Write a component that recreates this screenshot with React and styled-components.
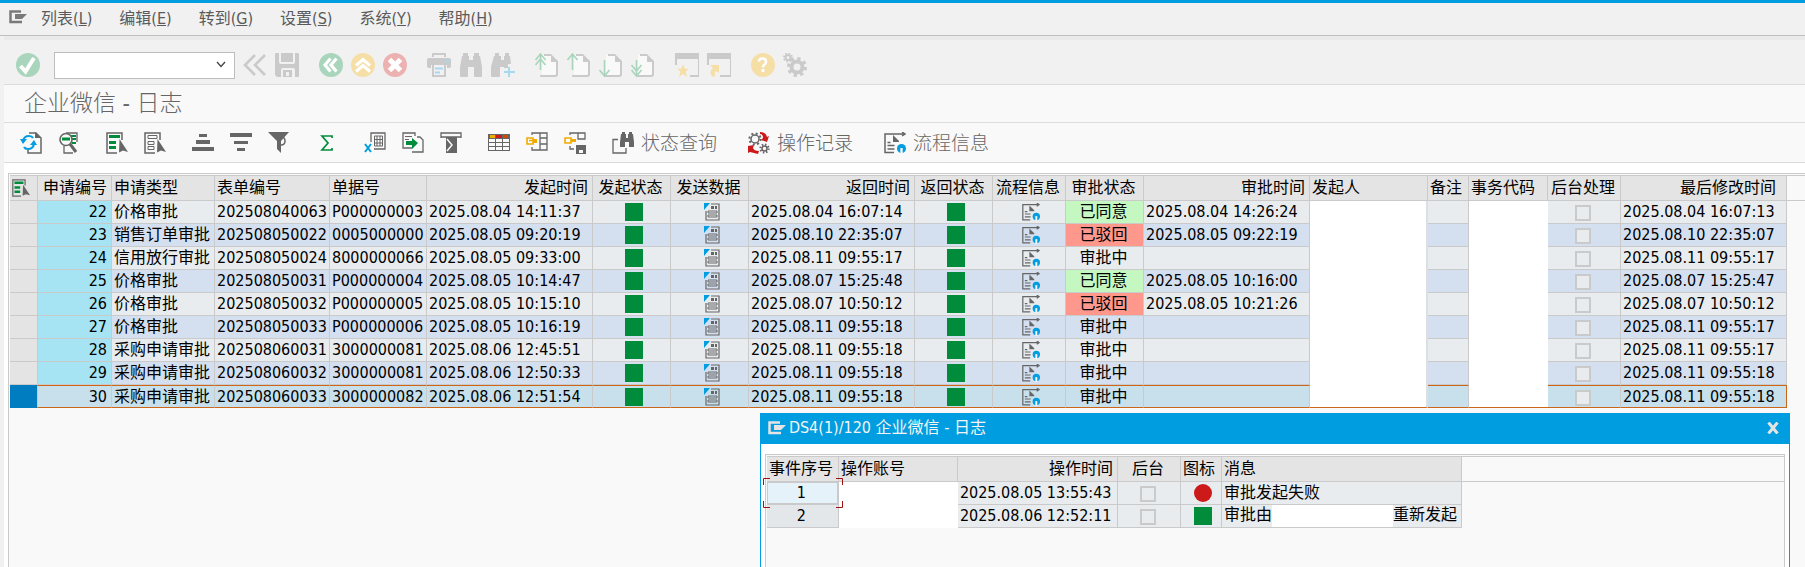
import React from "react";
import styled, { createGlobalStyle, css } from "styled-components";

const sans = '"DejaVu Sans Condensed", "Noto Sans CJK SC", sans-serif';
const line = "#cacaca";
const G = "#666666";
const GREEN = "#008c3a";
const BLUE = "#009de0";
const DIS = "#cacaca";
const RED = "#cc1919";

const Global = createGlobalStyle`
  * { box-sizing: border-box; }
  body { margin: 0; background: #fff; font-family: ${sans}; font-size: 16px; color: #000; overflow: hidden; }
  button { font: inherit; color: inherit; background: none; border: 0; padding: 0; }
`;

const Screen = styled.div`
  position: relative;
  display: flex;
  flex-direction: column;
  min-height: 100vh;
  border-top: 3px solid ${BLUE};
  background: #f1f1f1;
`;
const MenuBar = styled.nav`
  display: flex;
  align-items: center;
  gap: 27px;
  height: 33px;
  padding: 0 9px;
  border-bottom: 1px solid #bfbfbf;
  color: #5a5a5a;
  svg { margin-right: -13px; margin-bottom: 4px; }
`;
const MenuItem = styled.button`
  line-height: 24px;
  white-space: nowrap;
`;
const CommandBar = styled.div`
  display: flex;
  align-items: center;
  gap: 20px;
  height: 49px;
  margin-left: 4px;
  padding: 6px 12px 0;
  border-top: 4px solid #eaeaea;
  border-bottom: 1px solid #dcdcdc;
`;
const Group = styled.div`
  display: flex;
  align-items: center;
  gap: 8px;
`;
const IconButton = styled.button`
  display: flex;
  svg { display: block; }
`;
const Combo = styled.div`
  display: flex;
  align-items: center;
  width: 181px;
  height: 27px;
  margin: 0 -12px 0 -6px;
  padding-right: 7px;
  border: 1px solid #bdbdbd;
  background: #fff;
`;
const ComboInput = styled.input`
  flex: 1;
  min-width: 0;
  border: 0;
  outline: 0;
  background: transparent;
  font: inherit;
`;
const Title = styled.h1`
  height: 38px;
  margin: 0 0 0 4px;
  padding-left: 20px;
  border-bottom: 1px solid #dcdcdc;
  background: #f9f9f9;
  font-size: 23px;
  font-weight: 300;
  line-height: 36px;
  color: ${G};
`;
const AppBar = styled.div`
  display: flex;
  align-items: center;
  gap: 26px;
  height: 40px;
  margin-left: 4px;
  padding-left: 16px;
  border-bottom: 1px solid #dcdcdc;
  background: #f9f9f9;
`;
const AppGroup = styled(Group)`
  gap: 16px;
`;
const LabelButton = styled.button`
  display: flex;
  align-items: center;
  gap: 7px;
  margin-right: 5px;
  font-size: 19px;
  font-weight: 300;
  line-height: 24px;
  color: ${G};
  white-space: nowrap;
`;
const Body = styled.main`
  flex: 1;
  display: flex;
  margin-left: 4px;
  padding: 10px 0 0 4px;
  background: #fff;
`;
const Grid = styled.div`
  flex: 1;
  min-width: 0;
  padding: 1px 0 0 1px;
  border: 1px solid ${line};
  border-width: 1px 0 0 1px;
  background: #f9f9f9;
`;
const Table = styled.table`
  width: 100%;
  table-layout: fixed;
  border-collapse: separate;
  border-spacing: 0;
  border-top: 1px solid ${line};
`;
const Col = styled.col`
  width: ${(p) => (p.$w ? `${p.$w}px` : "auto")};
`;
const Th = styled.th`
  height: 25px;
  padding: 0 ${(p) => p.$end || 4}px 0 2px;
  border-right: 1px solid ${line};
  border-bottom: 1px solid ${line};
  background: #e4e4e4;
  font-weight: 400;
  line-height: 20px;
  text-align: ${(p) => p.$align || "left"};
  white-space: nowrap;
`;
const HeadFill = styled.td`
  border-bottom: 1px solid ${line};
`;
const tones = {
  ok: "#c4f8c0",
  bad: "#ff988c",
  key: "#a6e4f4",
  side: "#e4e4e4",
};
const Td = styled.td`
  height: 23px;
  padding: 0 4px 0 2px;
  border-right: 1px solid ${line};
  border-bottom: 1px solid ${line};
  background: ${(p) => tones[p.$tone] || "inherit"};
  line-height: 20px;
  text-align: ${(p) => p.$align || "left"};
  white-space: nowrap;
`;
const IconTd = styled(Td)`
  padding: 0 0 0 4px;
  svg { display: block; margin: 0 auto; }
`;
const Masked = styled.td`
  height: 23px;
  padding: 0;
  border-right: ${(p) => p.$edge || 0}px solid #dcdfe4;
  background: #fff;
`;
const Row = styled.tr`
  background: ${(p) => (p.$odd ? "#d4dff0" : "#e8ecef")};
  ${(p) =>
    p.$selected &&
    css`
      background: #c8e0ec;
      & > ${Td} {
        border-top: 1px solid #cc6619;
        border-bottom-color: #cc6619;
      }
      & > ${Td}:not(:first-child) {
        background: inherit;
      }
      & > ${Td}:last-child {
        border-right-color: #cc6619;
      }
      & > ${Masked} {
        border-bottom: 1px solid #cc6619;
      }
      & > ${Td}:first-child {
        border-color: #007cc0;
        border-right-color: ${line};
        background: #007cc0;
      }
    `}
`;
const Check = styled.input`
  appearance: none;
  display: block;
  width: 16px;
  height: 16px;
  margin: 2px auto 0;
  border: 2px solid ${line};
  background: #e8ecef;
`;

const Dialog = styled.section`
  position: absolute;
  top: 410px;
  right: 15px;
  bottom: 0;
  left: 42.1%;
  display: flex;
  flex-direction: column;
  border: 1px solid ${BLUE};
  border-width: 0 1px;
  background: #fff;
`;
const DialogTitle = styled.header`
  display: flex;
  align-items: center;
  gap: 3px;
  height: 31px;
  padding: 0 10px 2px 7px;
  background: ${BLUE};
  color: #f4f4f4;
  line-height: 24px;
`;
const DialogHeading = styled.h2`
  flex: 1;
  margin: 0;
  font-size: 16px;
  font-weight: 400;
`;
const DialogGrid = styled(Grid)`
  margin: 10px 4px 0;
  border-width: 1px 1px 0 1px;
`;
const FocusTd = styled(Td)`
  background: ${(p) => (p.$focus ? "#e5f2f9" : "#e4e7ea")};
  ${(p) =>
    p.$focus &&
    css`
      position: relative;
      box-shadow: inset 0 0 0 1px ${line};
      svg { position: absolute; top: -4px; left: -4px; z-index: 1; }
    `}
`;
const Message = styled.div`
  display: flex;
  align-items: stretch;
  height: 22px;
  line-height: 20px;
`;
const Blank = styled.span`
  flex: 0 0 121px;
  background: #fff;
`;

const Svg = ({ s = 24, w = s, h = s, box = `0 0 ${w} ${h}`, children }) => (
  <svg width={w} height={h} viewBox={box} fill="none" aria-hidden="true">
    {children}
  </svg>
);

const SystemMenuIcon = ({ c = "#7a7a7a" }) => (
  <Svg w={18} h={14}>
    <path d="M12 1.500H1.500v10.500H13" stroke={c} strokeWidth="2.500" />
    <path d="M6 4h12l-5 5H6z" fill={c} />
  </Svg>
);

const Disc = ({ c, children }) => (
  <Svg>
    <circle cx="12" cy="12" r="12" fill={c} />
    {children}
  </Svg>
);
const Page = () => (
  <>
    <path d="M7 1.500h10l5 5v16H7z" fill="#f9f9f9" />
    <path d="M9 1h7l7 7v13q0 3-3 3H6q-1 0-1-2h15q1 0 1-1V9h-5V3H9z" fill={DIS} />
  </>
);

const command = {
  enter: (
    <Disc c="#a8d5bb">
      <path d="M4.500 13l5 5.500L18 5" stroke="#fff" strokeWidth="4" />
    </Disc>
  ),
  collapse: (
    <Svg>
      <path d="M12 2L2 12l10 10M22 2L12 12l10 10" stroke={DIS} strokeWidth="2.600" />
    </Svg>
  ),
  save: (
    <Svg>
      <path d="M0 1q0-1 1-1h3v9q0 2 2 2h12q2 0 2-2V0h3q1 0 1 1v23h-4v-7q0-2-2-2H8q-2 0-2 2v7H2l-2-2z" fill={DIS} />
      <path d="M6 0h12v9H6zM8 17h9v7H8z" fill={DIS} />
      <path d="M11 19h3v4h-3z" fill="#f1f1f1" />
    </Svg>
  ),
  back: (
    <Disc c="#a8d5bb">
      <path d="M11.500 5.500L6 12l5.500 6.500M17.500 5.500L12 12l5.500 6.500" stroke="#fff" strokeWidth="3.200" />
    </Disc>
  ),
  exit: (
    <Disc c="#f5dfa6">
      <path d="M5 12.500L12 6.500l7 6M5 18.500l7-6 7 6" stroke="#fff" strokeWidth="3.200" />
    </Disc>
  ),
  cancel: (
    <Disc c="#ecb1b1">
      <path d="M6.500 6.500l11 11M17.500 6.500l-11 11" stroke="#fff" strokeWidth="5" />
    </Disc>
  ),
  print: (
    <Svg>
      <path d="M5 4V1q0-1 1-1h12q1 0 1 1v3h-2V2H7v2zM2 5h20q2 0 2 2v6q0 2-2 2h-2v-3H4v3H2q-2 0-2-2V7q0-2 2-2z" fill={DIS} />
      <path d="M6 12v11h12V12" stroke={DIS} strokeWidth="2" />
      <path d="M8 15.500h8M8 19.500h5M18 8h4" stroke="#a6d8f0" strokeWidth="2" />
    </Svg>
  ),
  find: (
    <Svg>
      <path
        d="M4 0h5v3h1v4h4V3h1V0h5v3h1l2 11v9q0 1-1 1h-6q-1 0-1-1v-9h-6v9q0 1-1 1H2q-1 0-1-1v-9L3 3h1z"
        fill={DIS}
      />
    </Svg>
  ),
  findNext: (
    <Svg>
      <path d="M4 0h4v3h2v4h3V3h1V0h4v3h1l1 8h-3v4h-4v-1H9v9q0 1-1 1H1q-1 0-1-1v-9L3 3h1z" fill={DIS} />
      <path d="M18 14v10M13 19h11" stroke="#a6d8f0" strokeWidth="2" />
    </Svg>
  ),
  first: (
    <Svg>
      <Page />
      <path d="M5.500 2v15M0.500 7l5-6 5 6M0.500 12l5-6 5 6" stroke="#a8d5bb" strokeWidth="1.600" />
    </Svg>
  ),
  prev: (
    <Svg>
      <Page />
      <path d="M5.500 1v16M0.500 7l5-6 5 6" stroke="#a8d5bb" strokeWidth="1.600" />
    </Svg>
  ),
  next: (
    <Svg>
      <Page />
      <path d="M5.500 7v16M0.500 17l5 6 5-6" stroke="#a8d5bb" strokeWidth="1.600" />
    </Svg>
  ),
  last: (
    <Svg>
      <Page />
      <path d="M5.500 7v16M0.500 12l5 6 5-6M0.500 17l5 6 5-6" stroke="#a8d5bb" strokeWidth="1.600" />
    </Svg>
  ),
  session: (
    <Svg>
      <path d="M0 0h25v24H15v-2h8V6H2v6H0z" fill={DIS} />
      <path d="M8 11l1.800 4.800H14l-3.400 3L12 24l-4-3-4 3 1.400-5.200L2 15.800h4.200z" fill="#f5dfa6" />
    </Svg>
  ),
  shortcut: (
    <Svg>
      <path d="M0 0h25v24H13v-2h10V6H2v6H0z" fill={DIS} />
      <path d="M3 12h9v8l-3-2q-2 1-1 6-6-1-4-7l2-2z" fill="#f5dfa6" />
    </Svg>
  ),
  help: (
    <Disc c="#f5dfa6">
      <path d="M8 8.500Q8 5.500 11.500 5.500t3.500 3q0 2-1.500 3-1.500 1-1.500 3" stroke="#fff" strokeWidth="2.600" />
      <path d="M10.500 16h3v3h-3z" fill="#fff" />
    </Disc>
  ),
  customize: (
    <Svg>
      <circle cx="14" cy="14" r="5.500" stroke={DIS} strokeWidth="4" />
      <circle cx="14" cy="14" r="8.500" stroke={DIS} strokeWidth="3" strokeDasharray="3.300 3.380" />
      <circle cx="5" cy="4.500" r="2.500" stroke={DIS} strokeWidth="2" />
      <circle cx="5" cy="4.500" r="4" stroke={DIS} strokeWidth="2" strokeDasharray="1.600 1.540" />
    </Svg>
  ),
};

const Gear = ({ x, y, r }) => (
  <>
    <circle cx={x} cy={y} r={r} stroke={G} strokeWidth="1.500" />
    <circle cx={x} cy={y} r={r + 1.6} stroke={G} strokeWidth="2" strokeDasharray={`${(r + 1.6) * 0.36} ${(r + 1.6) * 0.425}`} />
  </>
);
const SelectAll = ({ s = 22, on = GREEN }) => (
  <Svg s={s} box="0 0 22 22">
    <path d="M16 8V1H1v20h10" stroke={G} strokeWidth="1.500" />
    {on ? (
      <path d="M3 3h11v3H3zM3 9h7v3H3zM3 14h7v3H3z" fill={on} />
    ) : (
      <path d="M4 3.500h9v3H4zM4 9.500h6v3H4zM4 14.500h6v3H4z" stroke={G} />
    )}
    <path d="M13.500 7L22 20l-5-1.500-4 2z" fill={G} />
  </Svg>
);
const FlowIcon = ({ s = 22 }) => (
  <Svg s={s} box="0 0 22 22">
    <path d="M21 2H1v18.500h9M18 0l3 2-3 2" stroke={G} strokeWidth="1.500" />
    <path d="M9 3l6 6v1H9z" fill={G} />
    <path d="M3.500 10.500h3M3.500 13.500h7M3.500 17h7" stroke={G} strokeWidth="1.400" />
    <circle cx="17.500" cy="16.500" r="4.500" fill={BLUE} />
    <path d="M17.500 22v-6" stroke="#f4f6f8" strokeWidth="2.400" />
  </Svg>
);

const tool = {
  refresh: (
    <Svg s={22}>
      <path d="M9 1h7l5 5v15H8v-3" stroke={G} strokeWidth="1.500" />
      <path d="M15 0l6 6h-6z" fill={G} />
      <path d="M3 9q1-5 6-5 3 0 4 2M14 12q-1 5-6 5-3 0-4-2" stroke={BLUE} strokeWidth="2" />
      <path d="M0 7h7l-4 5zM10 13h7l-3-5z" fill={BLUE} />
    </Svg>
  ),
  details: (
    <Svg s={22}>
      <path d="M8 1h11v9M6 14v7h9" stroke={G} strokeWidth="1.300" />
      <path d="M13 3h5v2h-5zM13 6h5v2h-5zM14 10h4v2h-4z" fill={GREEN} />
      <circle cx="8" cy="7.500" r="6" stroke={G} strokeWidth="1.600" fill="#f9f9f9" />
      <path d="M4 5.500h8v3H4z" fill={GREEN} />
      <path d="M12 12l6 8" stroke={G} strokeWidth="3" />
    </Svg>
  ),
  all: <SelectAll />,
  none: <SelectAll on={null} />,
  asc: (
    <Svg s={22}>
      <path d="M7 2h8v3H7zM4 8h14v4H4zM0 15h22v4H0z" fill={G} />
    </Svg>
  ),
  desc: (
    <Svg s={22}>
      <path d="M0 1h22v4H0zM4 9h14v3H4zM7 16h8v3H7z" fill={G} />
    </Svg>
  ),
  filter: (
    <Svg s={22}>
      <path d="M0 0h21l-8 9v12l-4-4V9z" fill={G} />
      <path d="M13 5q4 0 4 4t-4 4" stroke={G} strokeWidth="1.500" />
    </Svg>
  ),
  sum: (
    <Svg s={22}>
      <path d="M16 6V4H6l6 7-6 7h10v-2" stroke={GREEN} strokeWidth="1.700" />
    </Svg>
  ),
  sheet: (
    <Svg s={22}>
      <path d="M7 10V1h14v16H10" stroke={G} strokeWidth="1.300" />
      <path d="M10.500 4h8v10h-8zM10.500 7.500h8M10.500 11h8M13 4v10M16 4v10" stroke={G} />
      <path d="M1 12l6 8M7 12l-6 8" stroke={BLUE} strokeWidth="2" />
    </Svg>
  ),
  exportFile: (
    <Svg s={22}>
      <path d="M13 4V1H1v15h9M15 5h3l3 3v12H10" stroke={G} strokeWidth="1.300" />
      <path d="M3 4.500h7M3 7.500h4" stroke={G} />
      <path d="M4 9h6V6l6 5-6 6v-4H4z" fill={GREEN} />
    </Svg>
  ),
  send: (
    <Svg s={22}>
      <path d="M1 6V1h20v5M1 5h20" stroke={G} strokeWidth="1.300" />
      <path d="M6 5h11v16H6z" fill={G} />
      <path d="M7 7l5 6-5 6" stroke="#f9f9f9" strokeWidth="1.500" />
    </Svg>
  ),
  layout: (
    <Svg s={22}>
      <path d="M0 2h22v17H0z" fill={G} />
      <path d="M2 3h5v3H2z" fill="#f0ab00" />
      <path d="M8 3h6v3H8z" fill={RED} />
      <path d="M15 3h5v3h-5z" fill="#d04a00" />
      <path d="M1 7h6v3H1zM8 7h6v3H8zM15 7h6v3h-6zM1 11h6v3H1zM8 11h6v3H8zM15 11h6v3h-6zM1 15h6v3H1zM8 15h6v3H8zM15 15h6v3h-6z" fill="#f9f9f9" />
    </Svg>
  ),
  pickLayout: (
    <Svg s={22}>
      <path d="M6 3V1h15v17H6v-3M14 1v17M14 6h7M14 12h7" stroke={G} strokeWidth="1.300" />
      <path d="M1 6h6v6H1zM3 8.500h4" stroke="#f0ab00" strokeWidth="1.600" />
      <path d="M7 9h4" stroke="#f0ab00" strokeWidth="4" />
    </Svg>
  ),
  saveLayout: (
    <Svg s={22}>
      <path d="M6 3V1h15v6h-7V1M6 14v3h4" stroke={G} strokeWidth="1.300" />
      <path d="M1 6h6v5H1z" stroke="#f0ab00" strokeWidth="1.600" />
      <path d="M7 8.500h5" stroke="#f0ab00" strokeWidth="3" />
      <path d="M12 13h10v9H12z" fill={G} />
      <path d="M15 18h4v3h-4z" fill="#f9f9f9" />
    </Svg>
  ),
  query: (
    <Svg s={22}>
      <path d="M10 0h3v2h1v4h2V2h1V0h3v2h1l1 8v5h-5v-5h-4v5H8v-5l1-8h1z" fill={G} />
      <path d="M6 7.500H1V21h13v-5" stroke={G} strokeWidth="1.300" />
    </Svg>
  ),
  history: (
    <Svg s={22}>
      <Gear x={7} y={7} r={4} />
      <Gear x={16.500} y={16.500} r={2.500} />
      <path d="M12 0q6 0 7 5l2-1-2 6-6-2 2-2q0-4-3-4zM0 14l6-1-1 3q1 3 6 3l-1 3-8-2-2 1z" fill={RED} />
    </Svg>
  ),
  flow: <FlowIcon />,
};

const DocIcon = () => (
  <Svg s={18}>
    <path d="M1 0h6L1 7z" fill={BLUE} />
    <path d="M8 1h8v16H3V8" stroke={G} strokeWidth="1.200" />
    <path d="M8 3h3v3H8zM12 3h2v3h-2z" fill={G} />
    <path d="M5 8h9v2H5zM5 12h9v2H5z" stroke={G} />
  </Svg>
);
const GreenBox = () => (
  <Svg s={18}>
    <path d="M0 0h18v18H0z" fill={GREEN} />
  </Svg>
);
const RedDot = () => (
  <Svg s={18}>
    <circle cx="9" cy="9" r="9" fill={RED} />
  </Svg>
);

const menus = [
  ["列表", "L"],
  ["编辑", "E"],
  ["转到", "G"],
  ["设置", "S"],
  ["系统", "Y"],
  ["帮助", "H"],
];
const commandGroups = [
  [["collapse", "折叠"], ["save", "保存"]],
  [["back", "返回"], ["exit", "退出"], ["cancel", "取消"]],
  [["print", "打印"], ["find", "查找"], ["findNext", "查找下一个"]],
  [["first", "首页"], ["prev", "上一页"], ["next", "下一页"], ["last", "末页"]],
  [["session", "新建会话"], ["shortcut", "创建快捷方式"]],
  [["help", "帮助"], ["customize", "定制布局"]],
];
const toolGroups = [
  [["refresh", "刷新"], ["details", "明细"]],
  [["all", "全选"], ["none", "取消全选"]],
  [["asc", "升序"], ["desc", "降序"], ["filter", "筛选"]],
  [["sum", "合计"]],
  [["sheet", "电子表格"], ["exportFile", "导出"], ["send", "发送"]],
  [["layout", "更改布局"], ["pickLayout", "选择布局"], ["saveLayout", "保存布局"]],
];
const actions = [
  ["query", "状态查询"],
  ["history", "操作记录"],
  ["flow", "流程信息"],
];

const columns = [
  [74, "申请编号", "right"],
  [103, "申请类型"],
  [115, "表单编号"],
  [97, "单据号"],
  [166, "发起时间", "right"],
  [78, "发起状态", "center"],
  [78, "发送数据", "center"],
  [166, "返回时间", "right"],
  [78, "返回状态", "center"],
  [73, "流程信息", "center"],
  [78, "审批状态", "center"],
  [166, "审批时间", "right"],
  [118, "发起人"],
  [41, "备注"],
  [79, "事务代码"],
  [73, "后台处理", "center"],
  [166, "最后修改时间", "right", 10],
];
const rows = [
  ["22", "价格审批", "202508040063", "P000000003", "2025.08.04 14:11:37", "2025.08.04 16:07:14", "已同意", "2025.08.04 14:26:24", "2025.08.04 16:07:13"],
  ["23", "销售订单审批", "202508050022", "0005000000", "2025.08.05 09:20:19", "2025.08.10 22:35:07", "已驳回", "2025.08.05 09:22:19", "2025.08.10 22:35:07"],
  ["24", "信用放行审批", "202508050024", "8000000066", "2025.08.05 09:33:00", "2025.08.11 09:55:17", "审批中", "", "2025.08.11 09:55:17"],
  ["25", "价格审批", "202508050031", "P000000004", "2025.08.05 10:14:47", "2025.08.07 15:25:48", "已同意", "2025.08.05 10:16:00", "2025.08.07 15:25:47"],
  ["26", "价格审批", "202508050032", "P000000005", "2025.08.05 10:15:10", "2025.08.07 10:50:12", "已驳回", "2025.08.05 10:21:26", "2025.08.07 10:50:12"],
  ["27", "价格审批", "202508050033", "P000000006", "2025.08.05 10:16:19", "2025.08.11 09:55:18", "审批中", "", "2025.08.11 09:55:17"],
  ["28", "采购申请审批", "202508060031", "3000000081", "2025.08.06 12:45:51", "2025.08.11 09:55:18", "审批中", "", "2025.08.11 09:55:17"],
  ["29", "采购申请审批", "202508060032", "3000000081", "2025.08.06 12:50:33", "2025.08.11 09:55:18", "审批中", "", "2025.08.11 09:55:18"],
  ["30", "采购申请审批", "202508060033", "3000000082", "2025.08.06 12:51:54", "2025.08.11 09:55:18", "审批中", "", "2025.08.11 09:55:18"],
];
const statusTone = { 已同意: "ok", 已驳回: "bad" };

const logColumns = [
  [72, "事件序号"],
  [119, "操作账号"],
  [160, "操作时间", "right"],
  [63, "后台", "center"],
  [41, "图标"],
  [240, "消息"],
];

function RequestRow({ r, i }) {
  const [id, type, form, doc, sent, returned, status, approved, changed] = r;
  return (
    <Row $odd={i % 2 === 1} $selected={i === rows.length - 1}>
      <Td $tone="side" />
      <Td $tone="key" $align="right">{id}</Td>
      <Td>{type}</Td>
      <Td>{form}</Td>
      <Td>{doc}</Td>
      <Td>{sent}</Td>
      <IconTd><GreenBox /></IconTd>
      <IconTd><DocIcon /></IconTd>
      <Td>{returned}</Td>
      <IconTd><GreenBox /></IconTd>
      <IconTd><FlowIcon s={18} /></IconTd>
      <Td $tone={statusTone[status]} $align="center">{status}</Td>
      <Td>{approved}</Td>
      <Masked $edge={2} />
      <Td />
      <Masked />
      <Td><Check type="checkbox" disabled aria-label={`后台处理 ${id}`} /></Td>
      <Td>{changed}</Td>
    </Row>
  );
}

function LogDialog() {
  return (
    <Dialog role="dialog" aria-labelledby="log-title">
      <DialogTitle>
        <SystemMenuIcon c="#e4e4e4" />
        <DialogHeading id="log-title">DS4(1)/120 企业微信 - 日志</DialogHeading>
        <IconButton aria-label="关闭">
          <Svg s={12}>
            <path d="M1.500 0.500l9 11M10.500 0.500l-9 11" stroke="#e4e4e4" strokeWidth="3" />
          </Svg>
        </IconButton>
      </DialogTitle>
      <DialogGrid>
        <Table>
          <colgroup>
            {logColumns.map(([w, t]) => <Col key={t} $w={w} />)}
            <Col />
          </colgroup>
          <thead>
            <tr>
              {logColumns.map(([, t, a]) => <Th key={t} $align={a}>{t}</Th>)}
              <HeadFill />
            </tr>
          </thead>
          <tbody>
            <Row>
              <FocusTd $focus $align="center">
                1
                <Svg w={80} h={30}>
                  <path d="M0.500 7V0.500H7M73 0.500h6.500V7M0.500 23v6.500H7M73 29.500h6.500V23" stroke="#a01010" />
                </Svg>
              </FocusTd>
              <Masked />
              <Td>2025.08.05 13:55:43</Td>
              <Td><Check type="checkbox" disabled aria-label="后台 1" /></Td>
              <IconTd><RedDot /></IconTd>
              <Td>审批发起失败</Td>
            </Row>
            <Row>
              <FocusTd $align="center">2</FocusTd>
              <Masked />
              <Td>2025.08.06 12:52:11</Td>
              <Td><Check type="checkbox" disabled aria-label="后台 2" /></Td>
              <IconTd><GreenBox /></IconTd>
              <Td>
                <Message>
                  <span>审批由</span>
                  <Blank />
                  <span>重新发起</span>
                </Message>
              </Td>
            </Row>
          </tbody>
        </Table>
      </DialogGrid>
    </Dialog>
  );
}

export default function App() {
  return (
    <>
      <Global />
      <Screen>
        <MenuBar>
          <SystemMenuIcon />
          {menus.map(([t, k]) => (
            <MenuItem key={k}>{t}(<u>{k}</u>)</MenuItem>
          ))}
        </MenuBar>
        <CommandBar>
          <IconButton aria-label="回车">{command.enter}</IconButton>
          <Combo>
            <ComboInput aria-label="命令" />
            <IconButton aria-label="历史命令">
              <Svg s={12}>
                <path d="M2 3l4 4.500L10 3" stroke="#444" strokeWidth="1.300" />
              </Svg>
            </IconButton>
          </Combo>
          {commandGroups.map((g) => (
            <Group key={g[0][0]}>
              {g.map(([k, label]) => (
                <IconButton key={k} aria-label={label}>{command[k]}</IconButton>
              ))}
            </Group>
          ))}
        </CommandBar>
        <Title>企业微信 - 日志</Title>
        <AppBar>
          {toolGroups.map((g) => (
            <AppGroup key={g[0][0]}>
              {g.map(([k, label]) => (
                <IconButton key={k} aria-label={label}>{tool[k]}</IconButton>
              ))}
            </AppGroup>
          ))}
          {actions.map(([k, label]) => (
            <LabelButton key={k}>{tool[k]}{label}</LabelButton>
          ))}
        </AppBar>
        <Body>
          <Grid>
            <Table>
              <colgroup>
                <Col $w={28} />
                {columns.map(([w, t]) => <Col key={t} $w={w} />)}
                <Col />
              </colgroup>
              <thead>
                <tr>
                  <Th>
                    <IconButton aria-label="全选行"><SelectAll s={18} /></IconButton>
                  </Th>
                  {columns.map(([, t, a, end]) => <Th key={t} $align={a} $end={end}>{t}</Th>)}
                  <HeadFill />
                </tr>
              </thead>
              <tbody>
                {rows.map((r, i) => <RequestRow key={r[0]} r={r} i={i} />)}
              </tbody>
            </Table>
          </Grid>
        </Body>
        <LogDialog />
      </Screen>
    </>
  );
}
